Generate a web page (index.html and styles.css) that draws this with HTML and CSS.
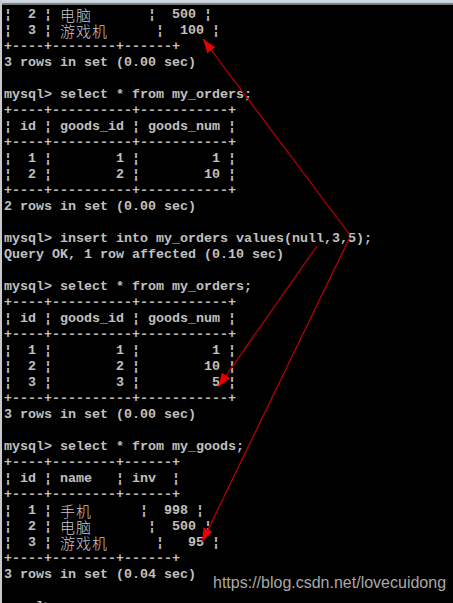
FILE: index.html
```html
<!DOCTYPE html>
<html>
<head>
<meta charset="utf-8">
<link rel="stylesheet" href="styles.css">
</head>
<body>
<div class="window">
  <div class="topbar"></div>
  <div class="console">
    <div class="ln">¦  2 ¦ <span class="cj">电脑</span>       ¦  500 ¦</div>
    <div class="ln">¦  3 ¦ <span class="cj">游戏机</span>      ¦  100 ¦</div>
    <div class="ln">+----+--------+------+</div>
    <div class="ln">3 rows in set (0.00 sec)</div>
    <div class="ln"></div>
    <div class="ln">mysql&gt; select * from my_orders;</div>
    <div class="ln">+----+----------+-----------+</div>
    <div class="ln">¦ id ¦ goods_id ¦ goods_num ¦</div>
    <div class="ln">+----+----------+-----------+</div>
    <div class="ln">¦  1 ¦        1 ¦         1 ¦</div>
    <div class="ln">¦  2 ¦        2 ¦        10 ¦</div>
    <div class="ln">+----+----------+-----------+</div>
    <div class="ln">2 rows in set (0.00 sec)</div>
    <div class="ln"></div>
    <div class="ln">mysql&gt; insert into my_orders values(null,3,5);</div>
    <div class="ln">Query OK, 1 row affected (0.10 sec)</div>
    <div class="ln"></div>
    <div class="ln">mysql&gt; select * from my_orders;</div>
    <div class="ln">+----+----------+-----------+</div>
    <div class="ln">¦ id ¦ goods_id ¦ goods_num ¦</div>
    <div class="ln">+----+----------+-----------+</div>
    <div class="ln">¦  1 ¦        1 ¦         1 ¦</div>
    <div class="ln">¦  2 ¦        2 ¦        10 ¦</div>
    <div class="ln">¦  3 ¦        3 ¦         5 ¦</div>
    <div class="ln">+----+----------+-----------+</div>
    <div class="ln">3 rows in set (0.00 sec)</div>
    <div class="ln"></div>
    <div class="ln">mysql&gt; select * from my_goods;</div>
    <div class="ln">+----+--------+------+</div>
    <div class="ln">¦ id ¦ name   ¦ inv  ¦</div>
    <div class="ln">+----+--------+------+</div>
    <div class="ln">¦  1 ¦ <span class="cj">手机</span>      ¦  998 ¦</div>
    <div class="ln">¦  2 ¦ <span class="cj">电脑</span>       ¦  500 ¦</div>
    <div class="ln">¦  3 ¦ <span class="cj">游戏机</span>      ¦   95 ¦</div>
    <div class="ln">+----+--------+------+</div>
    <div class="ln">3 rows in set (0.04 sec)</div>
    <div class="ln"></div>
    <div class="ln">mysql&gt;</div>
  </div>
  <svg class="arrows" width="453" height="603" viewBox="0 0 453 603">
    <defs>
      <marker id="ah" viewBox="0 0 14 10" refX="14" refY="5" markerWidth="14" markerHeight="10" markerUnits="userSpaceOnUse" orient="auto">
        <path d="M0,0 L14,5 L0,10 z" fill="#e80000"/>
      </marker>
    </defs>
    <line x1="350" y1="235" x2="203" y2="39" stroke="#c00000" stroke-width="1.2" marker-end="url(#ah)"/>
    <line x1="317" y1="246" x2="218" y2="387" stroke="#c00000" stroke-width="1.2" marker-end="url(#ah)"/>
    <line x1="350" y1="237" x2="202" y2="542" stroke="#c00000" stroke-width="1.2" marker-end="url(#ah)"/>
  </svg>
  <div class="watermark">https://blog.csdn.net/lovecuidong</div>
</div>
</body>
</html>
```
FILE: styles.css
```css
html, body {
  margin: 0;
  padding: 0;
  width: 453px;
  height: 603px;
  overflow: hidden;
  background: #000;
}
.window {
  position: relative;
  width: 453px;
  height: 603px;
  overflow: hidden;
  background: #000;
  box-sizing: border-box;
  border-left: 2px solid #c9c9c9;
}
.topbar {
  height: 5px;
  background: linear-gradient(#d3dbe5 0, #c4ccd6 3px, #8c8c8c 3px, #6a6a6a 5px);
}
.console {
  padding: 2px 0 0 2px;
  font-family: "Liberation Mono", monospace;
  font-size: 13.3333px;
  font-weight: bold;
  color: #c0c0c0;
}
.ln {
  height: 16px;
  line-height: 16px;
  white-space: pre;
}
.cj {
  display: inline-block;
  height: 16px;
  vertical-align: top;
  font-family: "Noto Sans CJK SC", sans-serif;
  font-size: 15px;
  letter-spacing: 1px;
  font-weight: 300;
  line-height: 16px;
  color: #c8c8c8;
}
.arrows {
  position: absolute;
  left: -2px;
  top: 0;
}
.watermark {
  position: absolute;
  left: 211px;
  top: 575px;
  font-family: "Liberation Sans", Arial, sans-serif;
  font-size: 16px;
  line-height: 16px;
  color: #a9a9a9;
  text-shadow: 0 0 1px #000;
  white-space: nowrap;
}
```
